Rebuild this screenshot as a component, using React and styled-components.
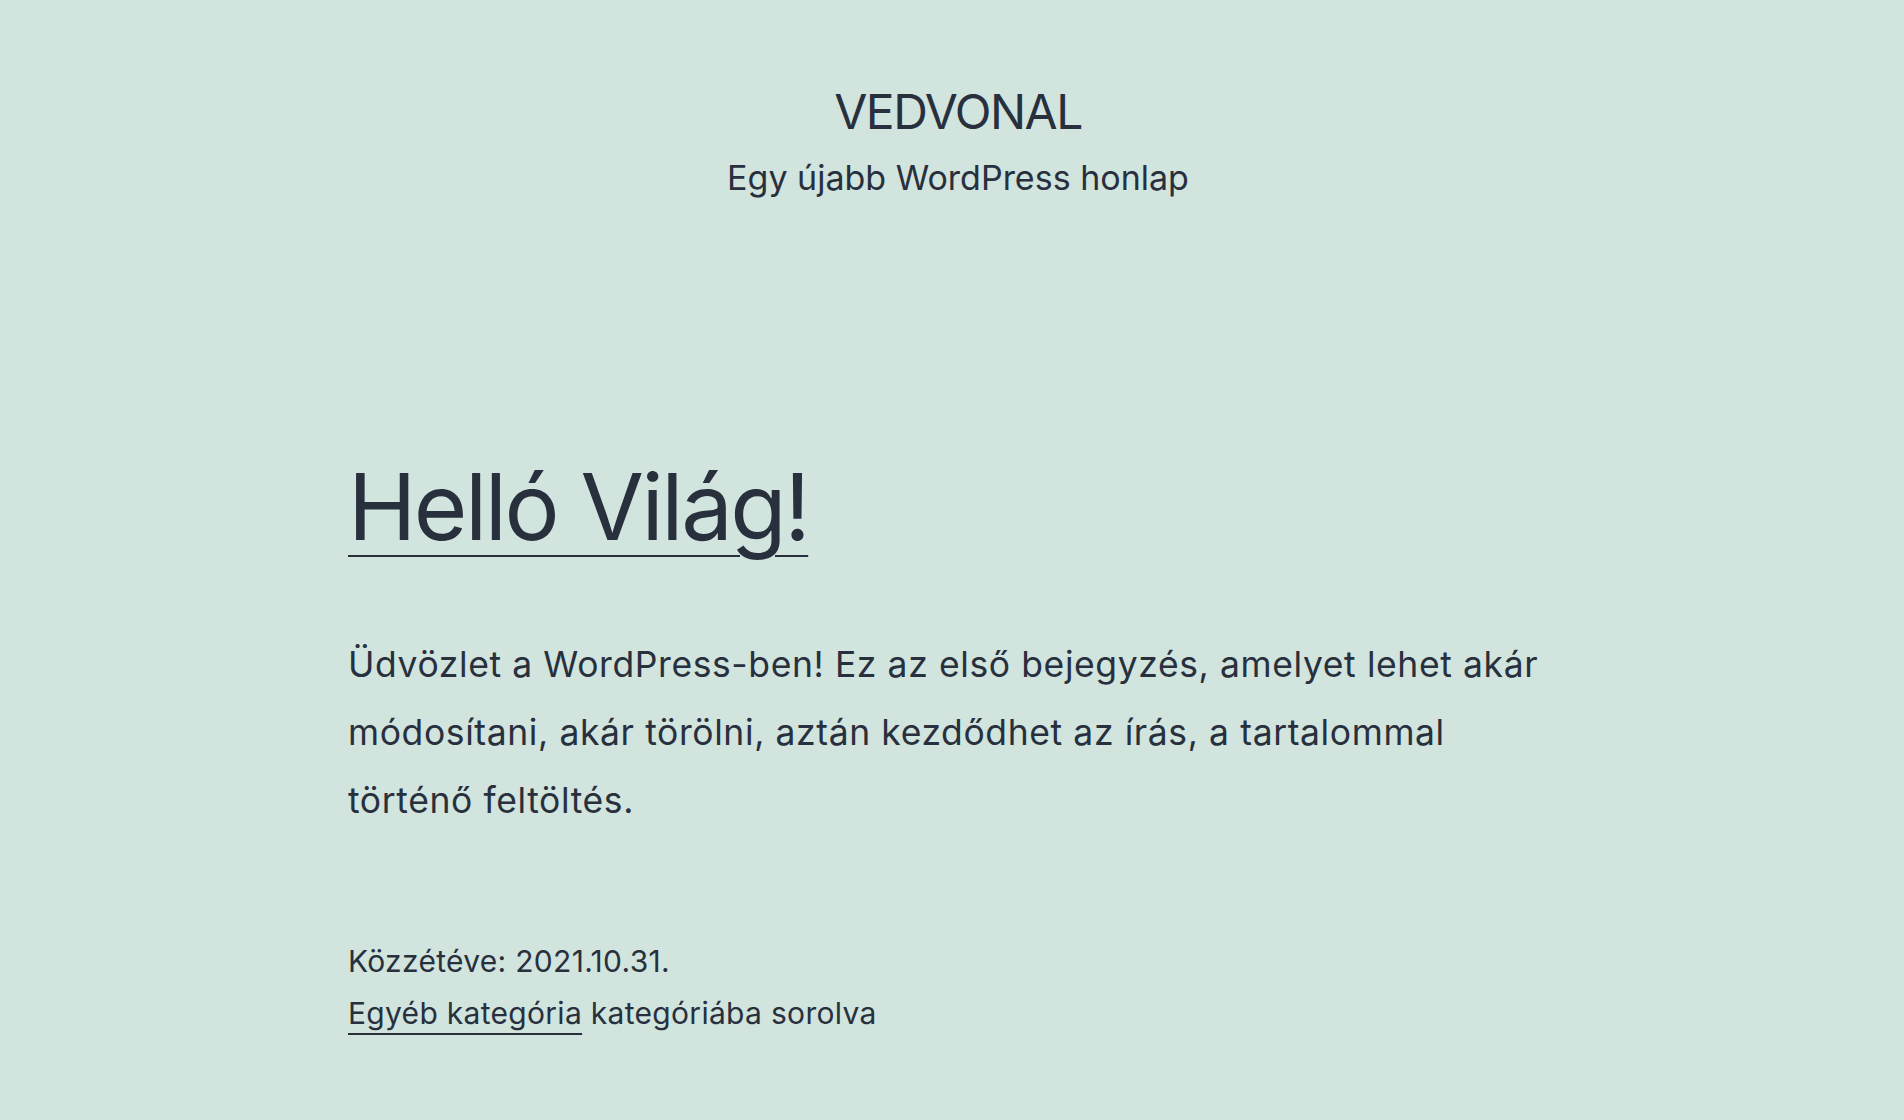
import React from "react";
import styled, { createGlobalStyle } from "styled-components";

const Global = createGlobalStyle`
  html, body { margin: 0; padding: 0; background: #d1e4dd; }
  body {
    font-family: Inter, "Noto Sans", "Liberation Sans", sans-serif;
    color: #28303d;
    -webkit-font-smoothing: antialiased;
  }
`;

const Page = styled.div`
  min-height: 1120px;
  background: #d1e4dd;
  display: flex;
  flex-direction: column;
`;

const Header = styled.header`
  display: flex;
  flex-direction: column;
  align-items: center;
  padding-top: 82px;
  padding-left: 12px;
`;

const SiteTitle = styled.h1`
  margin: 0;
  font-size: 48px;
  line-height: 60px;
  font-weight: 400;
  letter-spacing: -1.5px;
  text-transform: uppercase;
`;

const Tagline = styled.p`
  margin: 12px 0 0;
  font-size: 34px;
  line-height: 48px;
`;

const Main = styled.main`
  width: 1208px;
  margin: 250px auto 0;
`;

const EntryTitle = styled.h2`
  margin: 0;
  font-size: 92px;
  line-height: 110px;
  font-weight: 400;
  letter-spacing: -2.5px;
`;

const TitleLink = styled.a`
  color: inherit;
  text-decoration: underline;
  text-decoration-thickness: 2px;
  text-underline-offset: 15px;
`;

const Body = styled.p`
  margin: 69px 0 0;
  font-size: 35.5px;
  line-height: 68px;
  letter-spacing: 0.6px;
`;

const Meta = styled.footer`
  margin-top: 100px;
  font-size: 30px;
  line-height: 52px;
  letter-spacing: 0.3px;
`;

const MetaLine = styled.div``;

const MetaLink = styled.a`
  color: inherit;
  text-decoration: underline;
  text-decoration-thickness: 1.5px;
  text-underline-offset: 9px;
`;

export default function App() {
  return (
    <Page>
      <Global />
      <Header>
        <SiteTitle>Vedvonal</SiteTitle>
        <Tagline>Egy újabb WordPress honlap</Tagline>
      </Header>
      <Main>
        <EntryTitle>
          <TitleLink href="#">Helló Világ!</TitleLink>
        </EntryTitle>
        <Body>
          Üdvözlet a WordPress-ben! Ez az első bejegyzés, amelyet lehet akár
          módosítani, akár törölni, aztán kezdődhet az írás, a tartalommal
          történő feltöltés.
        </Body>
        <Meta>
          <MetaLine>Közzétéve: 2021.10.31.</MetaLine>
          <MetaLine>
            <MetaLink href="#">Egyéb kategória</MetaLink> kategóriába sorolva
          </MetaLine>
        </Meta>
      </Main>
    </Page>
  );
}
